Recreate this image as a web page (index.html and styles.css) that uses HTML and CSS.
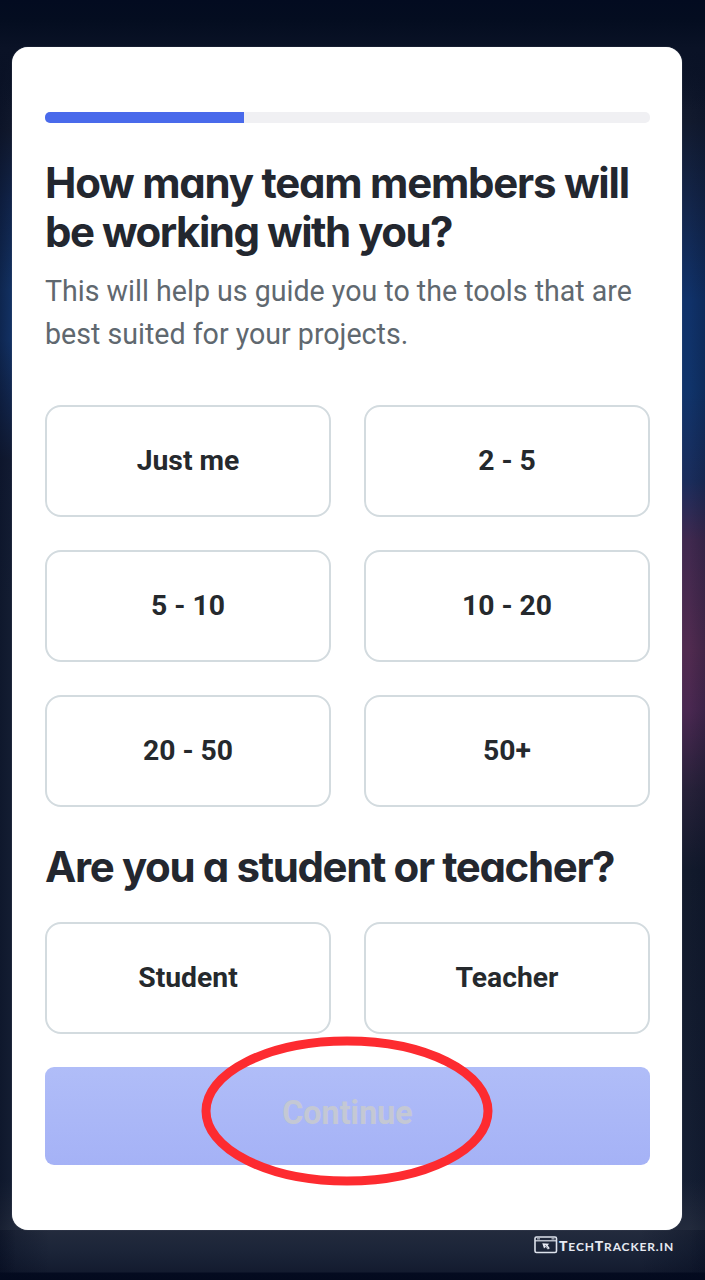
FILE: index.html
```
<!DOCTYPE html>
<html lang="en">
<head>
<meta charset="utf-8">
<title>Team size</title>
<link rel="stylesheet" href="styles.css">
</head>
<body>
<main class="card">
  <div class="progress"><div class="progress-fill"></div></div>
  <h1 class="title"><span class="line-a">How many team members will</span><br><span class="line-b">be working with you?</span></h1>
  <p class="subtitle">This will help us guide you to the tools that are<br>best suited for your projects.</p>
  <div class="options">
    <button class="option">Just me</button>
    <button class="option">2 - 5</button>
    <button class="option">5 - 10</button>
    <button class="option">10 - 20</button>
    <button class="option">20 - 50</button>
    <button class="option">50+</button>
  </div>
  <h2 class="title question">Are you a student or teacher?</h2>
  <div class="options">
    <button class="option">Student</button>
    <button class="option">Teacher</button>
  </div>
  <div class="submit">
    <button class="continue">Continue</button>
    <svg class="ring" viewBox="0 0 292 150" width="292" height="150"><ellipse cx="146" cy="75" rx="141" ry="70" fill="none" stroke="#fd2b30" stroke-width="9"/></svg>
  </div>
</main>
<footer class="brand">
  <svg width="25" height="18" viewBox="0 0 25 18" fill="none" stroke="#dde2ec">
    <rect x="1" y="1" width="21.500" height="15.500" rx="1.500" stroke-width="1.600"/>
    <path d="M1 4.800h21.500" stroke-width="1.200"/>
    <path d="M3 2.900h3M17.500 2.900h3" stroke-width="1"/>
    <path d="M8.300 7.200l7 .6-1.700 1.500 2.200 2.900-1.900 1.300-2.300-2.600-1.600 1.700z" fill="#e8ebf4" stroke="none"/>
    <path d="M11 9l2.800 3.500" stroke="#1b253b" stroke-width=".6"/>
  </svg>
  <span class="brand-name"><b>T</b>ECH<b>T</b>RACKER.IN</span>
</footer>
</body>
</html>
```
FILE: styles.css
```
* { box-sizing: border-box; }
body {
  margin: 0;
  height: 1280px;
  padding: 47px 23px 0 12px;
  overflow: hidden;
  font-family: Roboto, "Liberation Sans", sans-serif;
  background:
    linear-gradient(#030b20, #040d20 20px, #0a1226 48px, rgba(10, 18, 38, 0) 110px) 0 0 / 100% 110px no-repeat,
    linear-gradient(90deg, rgba(3, 10, 30, .35), rgba(3, 10, 30, 0)) 0 0 / 16px 100% no-repeat,
    linear-gradient(270deg, rgba(3, 10, 30, .2), rgba(3, 10, 30, 0)) 100% 0 / 16px 100% no-repeat,
    linear-gradient(90deg, rgba(3, 10, 30, .4), rgba(3, 10, 30, 0) 50px, rgba(3, 10, 30, 0) 640px, rgba(3, 10, 30, .4)) 0 1230px / 100% 50px no-repeat,
    linear-gradient(rgba(35, 43, 61, 0), #232b3d 50px, #1b2438 72px, #131b2f 92px, #040b20 93px, #030a1e) 0 1180px / 100% 100px no-repeat,
    linear-gradient(#0a1226 50px, #121a2e 130px, #12264d 200px, #143569 290px, #14356b 340px, #132850 400px, #131c34 460px, #151f34 600px, #151f34 1230px) 0 0 / 352px 100% no-repeat,
    linear-gradient(#0a1226 50px, #121a2e 120px, #13264c 210px, #10326a 300px, #10346b 390px, #1a2d5c 480px, #40294f 540px, #512b50 650px, #4a2851 710px, #272139 790px, #121a2c 870px, #151f34 1230px) 100% 0 / 353px 100% no-repeat;
}
.card {
  height: 1183px;
  padding: 65px 32px 0 33px;
  border-radius: 16px;
  background: #fff;
  box-shadow: 0 0 1px #8c929c;
}
.progress { height: 11px; border-radius: 5px; background: #f0f0f3; overflow: hidden; }
.progress-fill { width: 199px; height: 100%; background: #496aeb; }
.title {
  margin: 35px 0 0;
  font: 700 42px/49px Inter, sans-serif;
  font-feature-settings: "cv11";
  color: #23272f;
  white-space: nowrap;
}
.line-a { letter-spacing: -1.240px; }
.line-b { letter-spacing: -1.500px; }
.subtitle {
  margin: 13px 0 50px;
  padding-top: 1px;
  height: 86px;
  font-size: 28.600px;
  line-height: 43px;
  color: #60686f;
  white-space: nowrap;
}
.options { display: grid; grid-template-columns: 1fr 1fr; gap: 33px; }
.option {
  height: 112px;
  padding: 0 0 1px;
  border: 2px solid #d3dbdf;
  border-radius: 16px;
  background: #fff;
  font: 700 28.300px/40px Roboto, sans-serif;
  color: #25292d;
}
.question { margin: 35px 0 31px; letter-spacing: -1.370px; }
.submit { position: relative; margin-top: 33px; }
.continue {
  display: block;
  width: 100%;
  height: 98px;
  padding: 0 0 7px;
  border: 0;
  border-radius: 9px;
  background: linear-gradient(#b0bdf8, #a5b2f6);
  font: 700 32.300px/40px Roboto, sans-serif;
  color: #c4c8d4;
}
.ring { position: absolute; left: 156px; top: -31px; }
.brand { display: flex; align-items: center; justify-content: flex-end; height: 18px; margin: 6px -14px 0 0; }
.brand-name {
  font: 700 12px/18px Lato, sans-serif;
  letter-spacing: .850px;
  color: #e6eaf2;
  padding-top: 2px;
  margin-right: 22px;
}
.brand-name b { font-size: 14px; }
```
